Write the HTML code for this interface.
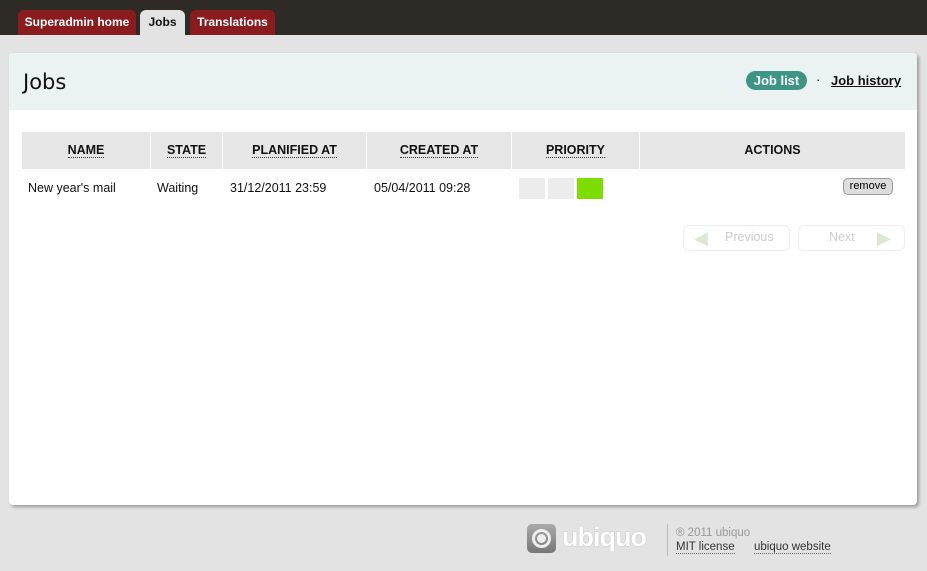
<!DOCTYPE html>
<html><head><meta charset="utf-8"><style>
*{margin:0;padding:0;box-sizing:border-box}
body{width:927px;height:571px;background:#e3e3e3;font-family:"Liberation Sans",sans-serif;position:relative;overflow:hidden}
.top{position:absolute;left:0;top:0;width:927px;height:35px;background:#2e2a25}
.tab{position:absolute;top:10px;height:25px;border-radius:6px 6px 0 0;font-size:12px;font-weight:bold;text-align:center;line-height:24px;color:#fff;background:#8a1c20}
.tab.on{background:#e3e3e3;color:#111}
.panel{position:absolute;left:9px;top:53px;width:908px;height:452px;background:#fff;border-radius:4px;box-shadow:2px 2px 3px #999}
.hd{position:absolute;left:0;top:0;width:908px;height:57px;background:#ebf3f2;border-radius:4px 4px 0 0}
h1{position:absolute;left:14px;top:17px;font-weight:normal;font-size:21px;font-family:"DejaVu Sans",sans-serif;color:#111}
.jl{position:absolute;left:737px;top:18px;width:61px;height:19px;border-radius:10px;background:#3f9585;color:#fff;font-size:13px;font-weight:bold;text-align:center;line-height:19px}
.jh{position:absolute;left:822px;top:20px;font-size:13px;font-weight:bold;color:#111;text-decoration:underline}
.dot{position:absolute;left:807px;top:19px;font-size:13px}
.th{position:absolute;top:79px;height:37px;background:#e6e6e6;font-size:12.5px;font-weight:bold;text-align:center;line-height:37px;color:#111}
.th span{border-bottom:1px dotted #333;line-height:14px;display:inline-block}
.td{position:absolute;top:127px;font-size:12.5px;color:#111}
.pb{position:absolute;top:125px;width:26px;height:21px;background:#ececec}
.rm{position:absolute;left:834px;top:124px;width:50px;height:17px;border:1px solid #999;border-radius:5px;background:#ddd;font-size:11px;text-align:center;line-height:15px}
.pg{position:absolute;top:172px;height:26px;border:1px solid #eee;border-radius:6px;font-size:12.5px;color:#ccc;line-height:22px}
.ft{position:absolute;font-size:11.5px;color:#333}
</style></head><body>
<div class="top"></div>
<div class="tab" style="left:18px;width:118px">Superadmin home</div>
<div class="tab on" style="left:140px;width:45px">Jobs</div>
<div class="tab" style="left:190px;width:85px">Translations</div>
<div class="panel">
<div class="hd"></div>
<h1>Jobs</h1>
<div class="jl">Job list</div><div class="dot">·</div><div class="jh">Job history</div>
<div class="th" style="left:13px;width:128px"><span>NAME</span></div>
<div class="th" style="left:142px;width:71px"><span>STATE</span></div>
<div class="th" style="left:214px;width:143px"><span>PLANIFIED AT</span></div>
<div class="th" style="left:358px;width:144px"><span>CREATED AT</span></div>
<div class="th" style="left:503px;width:127px"><span>PRIORITY</span></div>
<div class="th" style="left:631px;width:265px">ACTIONS</div>
<div class="td" style="left:19px;top:128px">New year's mail</div>
<div class="td" style="left:148px;top:128px">Waiting</div>
<div class="td" style="left:221px;top:128px">31/12/2011 23:59</div>
<div class="td" style="left:365px;top:128px">05/04/2011 09:28</div>
<div class="pb" style="left:510px"></div><div class="pb" style="left:539px"></div><div class="pb" style="left:568px;background:#7edd00"></div>
<div class="rm" style="top:125px">remove</div>
<div class="pg" style="left:674px;width:107px"><span style="position:absolute;left:10px;top:5px;color:#dde8d2;font-size:18px;line-height:14px">◀</span><span style="position:absolute;left:41px">Previous</span></div>
<div class="pg" style="left:789px;width:107px"><span style="position:absolute;left:30px">Next</span><span style="position:absolute;left:78px;top:5px;color:#dde8d2;font-size:18px;line-height:14px">▶</span></div>
</div>
<div style="position:absolute;left:527px;top:524px;width:29px;height:29px;border-radius:5px;background:linear-gradient(#aaa,#777)"><div style="position:absolute;left:5px;top:5px;width:19px;height:19px;border-radius:50%;border:3px solid #eee"></div><div style="position:absolute;left:10px;top:10px;width:9px;height:9px;border-radius:50%;background:#eee"></div></div>
<div style="position:absolute;left:562px;top:521px;font-size:27px;line-height:32px;font-weight:bold;color:#fff;letter-spacing:-1px;text-shadow:0 0 1px #999">ubiquo</div>
<div style="position:absolute;left:667px;top:524px;width:1px;height:32px;background:#bbb"></div>
<div class="ft" style="left:676px;top:527px;color:#999">® 2011 ubiquo</div>
<div class="ft" style="left:676px;top:541px;border-bottom:1px dotted #666">MIT license</div>
<div class="ft" style="left:754px;top:541px;border-bottom:1px dotted #666">ubiquo website</div>
</body></html>
